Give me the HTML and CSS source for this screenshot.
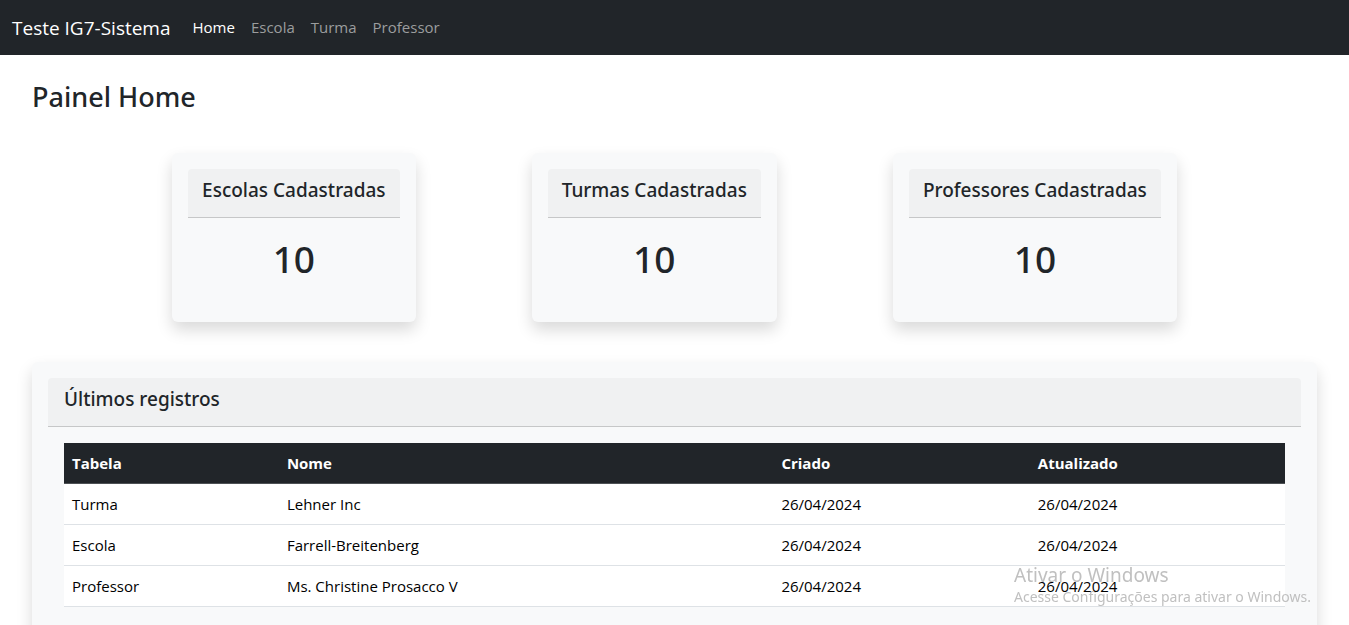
FILE: index.html
```html
<!DOCTYPE html>
<html lang="pt-BR">
<head>
<meta charset="utf-8">
<title>Teste IG7-Sistema</title>
<link rel="stylesheet" href="styles.css">
</head>
<body>
<nav class="navbar">
  <a class="brand" href="#">Teste IG7-Sistema</a>
  <a class="nav-link active" href="#">Home</a>
  <a class="nav-link" href="#">Escola</a>
  <a class="nav-link" href="#">Turma</a>
  <a class="nav-link" href="#">Professor</a>
</nav>
<main class="page">
  <h1 class="title">Painel Home</h1>
  <section class="stats">
    <article class="card"><h2 class="card-header">Escolas Cadastradas</h2><p class="count">10</p></article>
    <article class="card"><h2 class="card-header">Turmas Cadastradas</h2><p class="count">10</p></article>
    <article class="card"><h2 class="card-header">Professores Cadastradas</h2><p class="count">10</p></article>
  </section>
  <section class="card records">
    <h2 class="card-header">Últimos registros</h2>
    <div class="card-body">
      <table class="table">
        <thead>
          <tr><th class="col-table">Tabela</th><th class="col-name">Nome</th><th class="col-date">Criado</th><th>Atualizado</th></tr>
        </thead>
        <tbody>
          <tr><td>Turma</td><td>Lehner Inc</td><td>26/04/2024</td><td>26/04/2024</td></tr>
          <tr><td>Escola</td><td>Farrell-Breitenberg</td><td>26/04/2024</td><td>26/04/2024</td></tr>
          <tr><td>Professor</td><td>Ms. Christine Prosacco V</td><td>26/04/2024</td><td>26/04/2024</td></tr>
        </tbody>
      </table>
    </div>
  </section>
</main>
<aside class="watermark">
  <p class="watermark-title">Ativar o Windows</p>
  <p class="watermark-text">Acesse Configurações para ativar o Windows.</p>
</aside>
</body>
</html>
```
FILE: styles.css
```css
* { box-sizing: border-box; }
html { overflow: hidden; }
body {
  margin: 0;
  font-family: "Open Sans", "Noto Sans", sans-serif;
  font-size: 15px;
  line-height: 24px;
  color: #212529;
  background: #fff;
}
h1, h2, p { margin: 0; }
.navbar {
  display: flex;
  align-items: center;
  height: 55px;
  padding: 0 12px;
  background: #212529;
}
.brand { margin-right: 14px; font-size: 19px; color: #fff; text-decoration: none; }
.nav-link { padding: 7px 8px 9px; color: #9b9d9e; text-decoration: none; }
.nav-link.active { color: #fff; }
.page { padding: 24px 32px; }
.title, .card-header, .count { font-family: "Noto Sans", "Open Sans", sans-serif; font-weight: 500; }
.title { font-size: 27px; line-height: 36px; }
.stats {
  display: flex;
  justify-content: space-evenly;
  margin: 38px 24px 40px;
}
.card {
  padding: 16px;
  border-radius: 6px;
  background: #f8f9fa;
  box-shadow: 0 8px 16px rgba(0, 0, 0, 0.15);
}
.card-header {
  padding: 9px 16px 15px;
  border-bottom: 1px solid #c6c7c8;
  border-radius: 4px 4px 0 0;
  background: #f0f1f2;
  font-size: 19px;
  line-height: 24px;
}
.stats .card-header { padding-left: 14px; padding-right: 14px; }
.count {
  padding: 17px 16px 23px;
  font-size: 37px;
  line-height: 48px;
  text-align: center;
}
.card-body { padding: 16px; }
.table { width: 100%; table-layout: fixed; border-collapse: collapse; background: #fff; color: #000; }
.table th, .table td { padding: 8px; border-bottom: 1px solid #dee2e6; text-align: left; }
.table th { background: #212529; border-color: #4d5154; color: #fff; font-weight: 700; }
.col-table { width: 17.6%; }
.col-name { width: 40.5%; }
.col-date { width: 21%; }
.watermark {
  position: fixed;
  right: 38px;
  bottom: 18px;
  color: #c0c0c0;
  mix-blend-mode: darken;
  font-family: "Noto Sans", "Open Sans", sans-serif;
}
.watermark-title { font-size: 19px; }
.watermark-text { font-size: 14px; line-height: 20px; }
```
